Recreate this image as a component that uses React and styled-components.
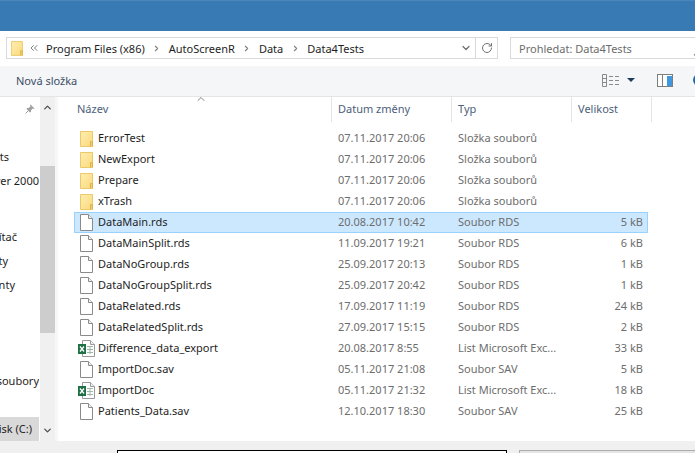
import React from "react";
import styled, { createGlobalStyle } from "styled-components";
import { ChevronDown, ChevronRight, ChevronUp, ChevronsLeft, RotateCw } from "lucide-react";

const GlobalStyle = createGlobalStyle`
  html, body {
    margin: 0;
    padding: 0;
    background: #fff;
  }
  body {
    font-family: "Noto Sans", "Open Sans", sans-serif;
    font-size: 11px;
  }
`;

const Page = styled.div`
  width: 695px;
  height: 453px;
  display: flex;
  flex-direction: column;
  overflow: hidden;
  background: #fff;
`;

const TitleBar = styled.div`
  height: 31px;
  flex: none;
  background: #387ab4;
  border-top: 1px solid #4a86bb;
  box-sizing: border-box;
`;

const AddressRow = styled.div`
  height: 35px;
  flex: none;
  display: flex;
  align-items: flex-start;
  padding: 6px 0 0 6px;
  box-sizing: border-box;
  gap: 12px;
`;

const AddressBox = styled.div`
  width: 492px;
  height: 22px;
  flex: none;
  box-sizing: border-box;
  border: 1px solid #d9d9d9;
  display: flex;
  align-items: center;
  padding-left: 4px;
  color: #1e1e1e;
`;

const BackChevrons = styled.span`
  display: flex;
  margin-left: 5px;
  color: #808080;
`;

const Crumbs = styled.div`
  display: flex;
  align-items: center;
  flex: 1;
  margin-left: 6px;
`;

const CrumbSep = styled.span`
  display: flex;
  justify-content: center;
  width: 24px;
  color: #808080;
`;

const Crumb = styled.span`
  white-space: nowrap;
`;

const RefreshCell = styled.div`
  width: 21px;
  height: 20px;
  flex: none;
  border-left: 1px solid #d9d9d9;
  display: flex;
  align-items: center;
  justify-content: center;
  color: #707070;
`;

const DropCell = styled.div`
  display: flex;
  margin-right: 3px;
  color: #707070;
`;

const SearchBox = styled.div`
  flex: 1;
  height: 22px;
  box-sizing: border-box;
  border: 1px solid #d9d9d9;
  border-right: none;
  display: flex;
  align-items: center;
  justify-content: space-between;
  padding-left: 8px;
  color: #6d6d6d;
  overflow: hidden;
  white-space: nowrap;
`;

const Toolbar = styled.div`
  height: 31px;
  flex: none;
  box-sizing: border-box;
  background: #f5f6f7;
  border-bottom: 1px solid #e5e5e5;
  display: flex;
  align-items: center;
  justify-content: space-between;
  padding: 0 0 2px 16px;
  color: #3c4f66;
`;

const ToolIcons = styled.div`
  display: flex;
  align-items: center;
`;

const Main = styled.div`
  flex: 1;
  min-height: 0;
  display: flex;
`;

const Nav = styled.nav`
  width: 40px;
  flex: none;
  overflow: hidden;
  color: #1e1e1e;
`;

const PinRow = styled.div`
  height: 24px;
  display: flex;
  align-items: center;
  justify-content: flex-end;
  padding-right: 5px;
  margin-bottom: 24px;
`;

const NavItem = styled.div`
  height: 24px;
  box-sizing: border-box;
  display: flex;
  align-items: center;
  justify-content: flex-end;
  white-space: nowrap;
  overflow: hidden;
  margin-right: 1px;
  padding-right: ${(p) => p.$end}px;
  padding-bottom: 2px;
  margin-bottom: ${(p) => (p.$gap ? 8 : 0)}px;
  background: ${(p) => (p.$active ? "#d9d9d9" : "transparent")};
`;

const ScrollBar = styled.div`
  width: 15px;
  flex: none;
  background: #f0f0f0;
  display: flex;
  flex-direction: column;
  align-items: center;
  color: #505050;
`;

const ScrollArrow = styled.div`
  height: 21px;
  flex: none;
  display: flex;
  align-items: center;
`;

const ScrollThumb = styled.div`
  width: 100%;
  height: 167px;
  margin-top: 48px;
  margin-bottom: auto;
  background: #cdcdcd;
`;

const Gutter = styled.div`
  width: 3px;
  flex: none;
  background: #f7f7f7;
`;

const Content = styled.div`
  flex: 1;
  min-width: 0;
`;

const Header = styled.div`
  height: 25px;
  margin-left: 13px;
  display: grid;
  grid-template-columns: 261px 120px 120px 80px;
  position: relative;
`;

const HeaderCell = styled.div`
  border-right: 1px solid #e5e5e5;
  padding: 0 0 2px 6px;
  display: flex;
  align-items: center;
  color: #4c607a;
`;

const SortCaret = styled.span`
  position: absolute;
  left: 124px;
  top: -4px;
  display: flex;
  color: #808080;
`;

const FileList = styled.div`
  margin: 6px 0 0 16px;
  width: 574px;
`;

const Row = styled.div`
  height: 21px;
  box-sizing: border-box;
  border: 1px solid ${(p) => (p.$selected ? "#99d1ff" : "transparent")};
  background: ${(p) => (p.$selected ? "#cce8ff" : "transparent")};
  display: grid;
  grid-template-columns: 263px 120px 113px 1fr;
  align-items: center;
  color: #6d6d6d;
  white-space: nowrap;
`;

const NameCell = styled.div`
  display: flex;
  align-items: center;
  color: #1e1e1e;
`;

const IconSlot = styled.span`
  width: 23px;
  flex: none;
  display: flex;
  justify-content: center;
`;

const RowText = styled.div`
  padding-bottom: 2px;
`;

const SizeCell = styled(RowText)`
  text-align: right;
  padding-right: 4px;
`;

const Footer = styled.div`
  height: 12px;
  flex: none;
  background: #f0f0f0;
  display: flex;
  align-items: flex-start;
  padding: 9px 0 0 117px;
  box-sizing: border-box;
  gap: 12px;
`;

const FileNameInput = styled.div`
  width: 390px;
  height: 20px;
  flex: none;
  box-sizing: border-box;
  border: 1px solid #000;
  background: #fff;
`;

const TypeSelect = styled.div`
  flex: 1;
  height: 20px;
  box-sizing: border-box;
  border: 1px solid #adadad;
  border-right: none;
  background: #e5e5e5;
`;

function FolderIcon({ size = 16 }) {
  const w = size - 3;
  return (
    <svg width={w} height={size} viewBox="0 0 13 16">
      <defs>
        <linearGradient id={`fold${size}`} x1="0" y1="0" x2="1" y2="1">
          <stop offset="0" stopColor="#ffedb0" />
          <stop offset="1" stopColor="#fad97c" />
        </linearGradient>
      </defs>
      <path d="M0.5 0.5H12.5V15.5H0.5Z" fill={`url(#fold${size})`} stroke="#ecc968" />
      <path d="M10.5 15.5V10.5H12.5V15.5" fill="#f6cf6b" stroke="#dcb24c" />
    </svg>
  );
}

function FileIcon() {
  return (
    <svg width="13" height="17" viewBox="0 0 13 17">
      <path d="M0.5 0.5H8.5L12.5 4.5V16.5H0.5Z" fill="#fff" stroke="#8a8a8a" />
      <path d="M8.5 0.5V4.5H12.5" fill="#f0f0f0" stroke="#8a8a8a" />
    </svg>
  );
}

function ExcelIcon() {
  return (
    <svg width="17" height="17" viewBox="0 0 17 17">
      <path d="M4.5 0.5H12.5L16.5 4.5V16.5H4.5Z" fill="#fff" stroke="#9a9a9a" />
      <path d="M12.5 0.5V4.5H16.5" fill="#f0f0f0" stroke="#9a9a9a" />
      <path d="M9 6.5H15M9 9.5H15M9 12.5H15M12 6V14" stroke="#9fb8a8" strokeWidth="1" />
      <rect x="0" y="4" width="8" height="10" fill="#1e7145" />
      <path d="M2 6.5L6 11.5M6 6.5L2 11.5" stroke="#fff" strokeWidth="1.3" />
    </svg>
  );
}

function PinIcon() {
  return (
    <svg width="10" height="10" viewBox="0 0 10 10">
      <path d="M5.5 0.5L9.5 4.5L8.5 5L7.5 4.5L6 6.5L6 8L5 8.5L1.5 5L2 4L3.5 4L5.5 2.5L5 1.5Z" fill="#a0a0a0" />
      <path d="M3 7L0.5 9.5" stroke="#a0a0a0" />
    </svg>
  );
}

function ViewIcon() {
  return (
    <svg width="17" height="13" viewBox="0 0 17 13">
      <path d="M0.5 0.5H4.5V12.5H0.5ZM0.5 4.5H4.5M0.5 8.5H4.5" fill="none" stroke="#8a8a8a" />
      <path d="M7 2.5H11M13 2.5H17M7 6.5H11M13 6.5H17M7 10.5H11M13 10.5H17" stroke="#8a8a8a" />
    </svg>
  );
}

function PaneIcon() {
  return (
    <svg width="16" height="13" viewBox="0 0 16 13">
      <rect x="0.5" y="0.5" width="15" height="12" fill="#fff" stroke="#7d7d7d" />
      <rect x="5" y="1" width="1" height="11" fill="#7d7d7d" />
      <rect x="10" y="2" width="5" height="10" fill="#3f97e0" />
    </svg>
  );
}

const Caret = styled.span`
  width: 0;
  height: 0;
  margin-left: 8px;
  border-left: 4px solid transparent;
  border-right: 4px solid transparent;
  border-top: 4px solid #1f3a5a;
`;

const PaneSlot = styled.span`
  display: flex;
  margin-left: 22px;
`;

const HelpDot = styled.span`
  width: 12px;
  height: 12px;
  flex: none;
  margin: 0 -10px 0 20px;
  border-radius: 50%;
  background: #1c69b0;
`;

const SearchGlass = styled.span`
  width: 8px;
  height: 1px;
  flex: none;
  margin-right: -6px;
  margin-top: 8px;
  background: #606060;
  transform: rotate(-45deg);
`;

const navItems = [
  { label: "Documents", end: 30 },
  { label: "SQL Server 2000", end: 0, gap: true },
  { label: "", end: 0 },
  { label: "Tento počítač", end: 22 },
  { label: "Dokumenty", end: 31 },
  { label: "Dokumenty", end: 24 },
  { label: "", end: 0 },
  { label: "", end: 0 },
  { label: "", end: 0 },
  { label: "Stažené soubory", end: 0 },
  { label: "", end: 0 },
  { label: "Místní disk (C:)", end: 7, active: true },
];

const files = [
  { name: "ErrorTest", date: "07.11.2017 20:06", type: "Složka souborů", size: "", icon: "folder" },
  { name: "NewExport", date: "07.11.2017 20:06", type: "Složka souborů", size: "", icon: "folder" },
  { name: "Prepare", date: "07.11.2017 20:06", type: "Složka souborů", size: "", icon: "folder" },
  { name: "xTrash", date: "07.11.2017 20:06", type: "Složka souborů", size: "", icon: "folder" },
  { name: "DataMain.rds", date: "20.08.2017 10:42", type: "Soubor RDS", size: "5 kB", icon: "file", selected: true },
  { name: "DataMainSplit.rds", date: "11.09.2017 19:21", type: "Soubor RDS", size: "6 kB", icon: "file" },
  { name: "DataNoGroup.rds", date: "25.09.2017 20:13", type: "Soubor RDS", size: "1 kB", icon: "file" },
  { name: "DataNoGroupSplit.rds", date: "25.09.2017 20:42", type: "Soubor RDS", size: "1 kB", icon: "file" },
  { name: "DataRelated.rds", date: "17.09.2017 11:19", type: "Soubor RDS", size: "24 kB", icon: "file" },
  { name: "DataRelatedSplit.rds", date: "27.09.2017 15:15", type: "Soubor RDS", size: "2 kB", icon: "file" },
  { name: "Difference_data_export", date: "20.08.2017 8:55", type: "List Microsoft Exc...", size: "33 kB", icon: "excel" },
  { name: "ImportDoc.sav", date: "05.11.2017 21:08", type: "Soubor SAV", size: "5 kB", icon: "file" },
  { name: "ImportDoc", date: "05.11.2017 21:32", type: "List Microsoft Exc...", size: "18 kB", icon: "excel" },
  { name: "Patients_Data.sav", date: "12.10.2017 18:30", type: "Soubor SAV", size: "25 kB", icon: "file" },
];

const crumbs = ["Program Files (x86)", "AutoScreenR", "Data", "Data4Tests"];

function RowIcon({ kind }) {
  if (kind === "folder") return <FolderIcon />;
  if (kind === "excel") return <ExcelIcon />;
  return <FileIcon />;
}

export default function App() {
  return (
    <Page>
      <GlobalStyle />
      <TitleBar />
      <AddressRow>
        <AddressBox>
          <FolderIcon size={15} />
          <BackChevrons>
            <ChevronsLeft size={12} />
          </BackChevrons>
          <Crumbs>
            {crumbs.map((c, i) => (
              <React.Fragment key={c}>
                {i > 0 && (
                  <CrumbSep>
                    <ChevronRight size={9} strokeWidth={3} />
                  </CrumbSep>
                )}
                <Crumb>{c}</Crumb>
              </React.Fragment>
            ))}
          </Crumbs>
          <DropCell>
            <ChevronDown size={12} strokeWidth={2.5} />
          </DropCell>
          <RefreshCell>
            <RotateCw size={12} />
          </RefreshCell>
        </AddressBox>
        <SearchBox>
          Prohledat: Data4Tests
          <SearchGlass />
        </SearchBox>
      </AddressRow>
      <Toolbar>
        Nová složka
        <ToolIcons>
          <ViewIcon />
          <Caret />
          <PaneSlot>
            <PaneIcon />
          </PaneSlot>
          <HelpDot />
        </ToolIcons>
      </Toolbar>
      <Main>
        <Nav>
          <PinRow>
            <PinIcon />
          </PinRow>
          {navItems.map((item, i) => (
            <NavItem key={i} $end={item.end} $gap={item.gap} $active={item.active}>
              {item.label}
            </NavItem>
          ))}
        </Nav>
        <ScrollBar>
          <ScrollArrow>
            <ChevronUp size={11} strokeWidth={3} />
          </ScrollArrow>
          <ScrollThumb />
          <ScrollArrow>
            <ChevronDown size={11} strokeWidth={3} />
          </ScrollArrow>
        </ScrollBar>
        <Gutter />
        <Content>
          <Header>
            <SortCaret>
              <ChevronUp size={12} />
            </SortCaret>
            <HeaderCell>Název</HeaderCell>
            <HeaderCell>Datum změny</HeaderCell>
            <HeaderCell>Typ</HeaderCell>
            <HeaderCell>Velikost</HeaderCell>
          </Header>
          <FileList>
            {files.map((f) => (
              <Row key={f.name} $selected={f.selected}>
                <NameCell>
                  <IconSlot>
                    <RowIcon kind={f.icon} />
                  </IconSlot>
                  <RowText>{f.name}</RowText>
                </NameCell>
                <RowText>{f.date}</RowText>
                <RowText>{f.type}</RowText>
                <SizeCell>{f.size}</SizeCell>
              </Row>
            ))}
          </FileList>
        </Content>
      </Main>
      <Footer>
        <FileNameInput />
        <TypeSelect />
      </Footer>
    </Page>
  );
}
